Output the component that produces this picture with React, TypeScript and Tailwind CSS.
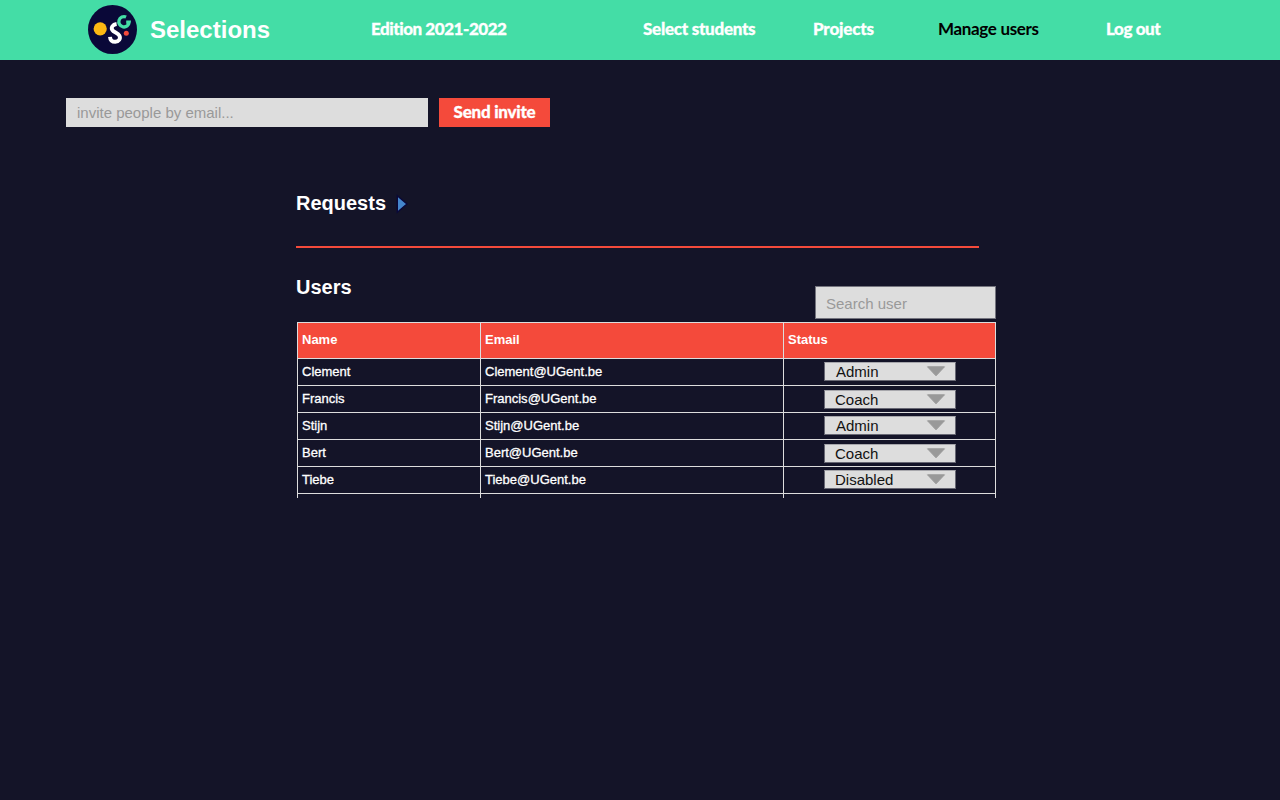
import React from "react";

const users = [
  { name: "Clement", status: "Admin", pad: "pt-[3px]", indent: "pl-[12px]" },
  { name: "Francis", status: "Coach", pad: "pt-[4px]", indent: "pl-[11px]" },
  { name: "Stijn", status: "Admin", pad: "pt-[3px]", indent: "pl-[12px]" },
  { name: "Bert", status: "Coach", pad: "pt-[4px]", indent: "pl-[11px]" },
  { name: "Tiebe", status: "Disabled", pad: "pt-[3px]", indent: "pl-[11px]" },
];

const columns = "grid grid-cols-[183px_303px_212px]";

function Logo() {
  return (
    <svg className="ml-[88px] mt-[5px] h-[49px] w-[49px] shrink-0" viewBox="0 0 49 49">
      <circle cx="24.5" cy="24.5" r="24.5" fill="#0a0838" />
      <circle cx="12.2" cy="23.8" r="6.6" fill="#fdb813" />
      <path
        d="M28.6 19C24.6 19.6 22.8 22.4 24.3 25C25.7 27.4 30 27.8 31.4 30.6C33 33.8 30.6 36.8 27.3 36.8C24.2 36.8 22.2 34.8 22 31.8"
        fill="none"
        stroke="#fff"
        strokeWidth="3.9"
      />
      <path d="M38.1 12A5.2 5.2 0 1 0 41.2 17.2H38.2" fill="none" stroke="#44dda6" strokeWidth="3.3" />
      <circle cx="38.3" cy="28.3" r="2.5" fill="#f44a3b" />
    </svg>
  );
}

function StatusSelect({ value, indent }: { value: string; indent: string }) {
  return (
    <button
      className={`flex h-[19px] w-[132px] items-center justify-between border border-[#686874] border-t-[#a7a7ac] bg-[#ddd] pr-[9px] text-[15px] leading-[17px] text-[#111] ${indent}`}
    >
      <span className="-ml-px">{value}</span>
      <svg className="h-[11px] w-[20px]" viewBox="0 0 20 11">
        <path d="M1.5 .8H18.5L10 9.8Z" fill="#999" stroke="#999" strokeWidth="1" strokeLinejoin="round" />
      </svg>
    </button>
  );
}

export default function App() {
  return (
    <div className="h-[800px] w-[1280px] overflow-hidden bg-[#141428] font-['Liberation_Sans',sans-serif] text-white">
      <header className="flex h-[60px] bg-[#44dda6]">
        <Logo />
        <div className="ml-[13px] w-[221px] text-[24px] leading-[60px] font-bold">Selections</div>
        <nav className="flex font-['Lato',sans-serif] text-[17px] leading-[58px] font-black whitespace-nowrap [font-variant-ligatures:none]">
          <a className="w-[272px] tracking-[-0.45px] [-webkit-text-stroke:0.3px_#fff]">Edition 2021-2022</a>
          <a className="w-[170px] tracking-[-0.27px] [-webkit-text-stroke:0.3px_#fff]">Select students</a>
          <a className="w-[125px] tracking-[-0.17px] [-webkit-text-stroke:0.3px_#fff]">Projects</a>
          <a className="w-[168px] font-bold tracking-[-0.33px] text-black">Manage users</a>
          <a className="tracking-[-0.42px] [-webkit-text-stroke:0.3px_#fff]">Log out</a>
        </nav>
      </header>

      <form className="flex gap-[11px] pt-[38px] pl-[66px]">
        <input
          className="h-[29px] w-[362px] bg-[#ddd] px-[11px] text-[15px] text-black outline-none placeholder:text-[#999]"
          placeholder="invite people by email..."
        />
        <button
          type="button"
          className="h-[29px] w-[111px] bg-[#f44a3b] pb-px font-['Lato',sans-serif] text-[17px] leading-[28px] font-black tracking-[-0.25px] whitespace-nowrap [-webkit-text-stroke:0.3px_#fff]"
        >
          Send invite
        </button>
      </form>

      <main className="ml-[296px] w-[700px] pt-[64px]">
        <div className="flex h-[24px] items-center">
          <h2 className="text-[20px] leading-[24px] font-bold">Requests</h2>
          <svg className="mt-[2px] ml-[10px] h-[20px] w-[14px]" viewBox="0 0 14 20">
            <path d="M1.3 1.7L11 10L1.3 18.3Z" fill="#4486cc" stroke="#0a0838" strokeWidth="1.4" />
          </svg>
        </div>
        <hr className="mt-[31px] h-[2px] w-[683px] border-0 bg-[#f44a3b]" />
        <div className="flex h-[74px] justify-between">
          <h2 className="mt-[27px] text-[20px] leading-[24px] font-bold">Users</h2>
          <input
            className="mt-[38px] h-[33px] w-[181px] border border-[#74747e] bg-[#ddd] px-[10px] pt-[2px] text-[15px] text-black outline-none placeholder:text-[#999]"
            placeholder="Search user"
          />
        </div>
        <div className="ml-px h-[176px] w-[699px] overflow-hidden border-t border-l border-[#ddd] text-[13px]">
          <div className={`${columns} bg-[#f44a3b] leading-[33px] font-bold`}>
            {["Name", "Email", "Status"].map((label) => (
              <div key={label} className="h-[36px] border-r border-b border-[#ddd] pl-[4px]">
                {label}
              </div>
            ))}
          </div>
          {users.map((user) => (
            <div key={user.name} className={`${columns} h-[27px] leading-[25px]`}>
              <div className="border-r border-b border-[#ddd] pl-[4px] [-webkit-text-stroke:0.3px_#fff]">{user.name}</div>
              <div className="border-r border-b border-[#ddd] pl-[4px] [-webkit-text-stroke:0.3px_#fff]">
                {user.name}@UGent.be
              </div>
              <div className={`border-r border-b border-[#ddd] pl-[40px] ${user.pad}`}>
                <StatusSelect value={user.status} indent={user.indent} />
              </div>
            </div>
          ))}
          <div className={`${columns} h-[27px]`}>
            <div className="border-r border-[#ddd]" />
            <div className="border-r border-[#ddd]" />
            <div className="border-r border-[#ddd]" />
          </div>
        </div>
      </main>
    </div>
  );
}
